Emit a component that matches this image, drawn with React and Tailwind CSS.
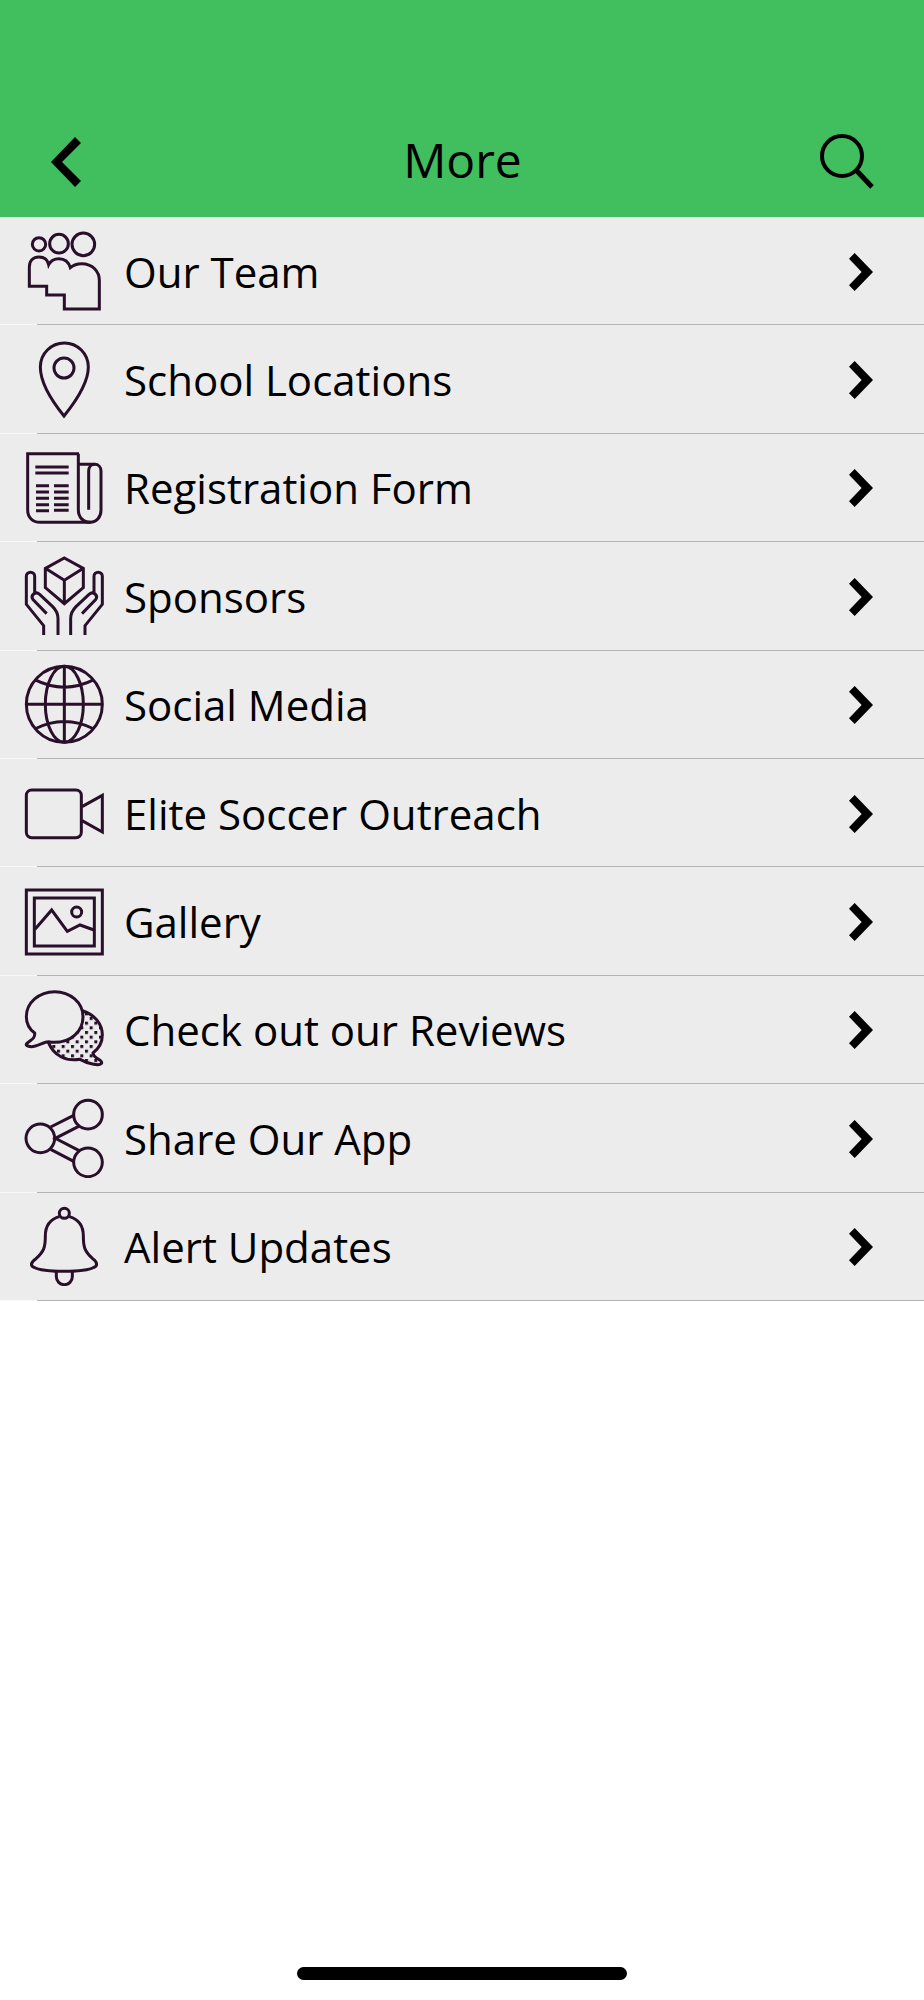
import React from "react";

const TeamIcon = () => (
  <>
    <circle cx="45" cy="40" r="20" />
    <circle cx="105" cy="38" r="28" />
    <circle cx="178" cy="40" r="34" />
    <path d="M16 166V108C16 88 28 78 45 78C60 78 71 87 74 101C80 89 92 83 105 83C121 83 134 93 139 110C148 102 160 98 173 98C206 98 226 122 226 148V234H121V192H68V166Z" />
  </>
);

const PinIcon = () => (
  <>
    <path d="M120 231C82 184 49 132 49 84A72 72 0 0 1 193 84C193 132 158 184 120 231Z" />
    <circle cx="120" cy="87" r="30" />
  </>
);

const FormIcon = () => (
  <>
    <path d="M200 226H48C26 226 11 211 11 190V20H165" />
    <path d="M163 20V188C163 211 178 226 198 226C218 226 231 210 231 190V72C231 60 223 52 212 52C201 52 194 60 194 72V188" />
    <path d="M165 52H212M34 60H134M34 78H134" />
    <path d="M36 116H75M36 135H75M36 154H75M36 173H75M36 191H75" />
    <path d="M90 116H134M90 135H134M90 154H134M90 173H134M90 190H134" />
  </>
);

const hand =
  "M59 237V209L7 145V61A12 12 0 0 1 32 61V113M68 173L27 131C18 118 34 104 47 115L86 152C96 162 102 172 102 188V237";

const SponsorsIcon = () => (
  <>
    <path d="M121 6L178 37V95L121 143L64 95V37ZM64 37L121 73L178 37M121 73V143" />
    <path d={hand} />
    <path d={hand} transform="matrix(-1 0 0 1 242 0)" />
  </>
);

const GlobeIcon = () => (
  <>
    <circle cx="121" cy="121" r="114" />
    <ellipse cx="121" cy="121" rx="57" ry="114" />
    <path d="M121 7V235M7 121H235M32 47Q121 92 210 47M32 195Q121 150 210 195" />
  </>
);

const VideoIcon = () => (
  <>
    <rect x="7" y="51" width="165" height="143" rx="16" />
    <path d="M174 101L235 67V177L174 143" />
  </>
);

const GalleryIcon = () => (
  <>
    <rect x="7" y="27" width="228" height="192" />
    <rect x="31" y="51" width="180" height="144" />
    <path d="M33 145L83 87L130 151L168 132L210 147" />
    <circle cx="158" cy="93" r="15" />
  </>
);

const ReviewsIcon = () => (
  <>
    <defs>
      <pattern id="dots" x="15" y="14" width="28" height="28" patternUnits="userSpaceOnUse">
        <path d="M0 0H9V9H0ZM14 14H23V23H14Z" fill="#2a0f2b" stroke="none" />
      </pattern>
    </defs>
    <path
      d="M177 66C213 78 235 105 235 138C235 160 225 178 207 192C207 208 236 212 233 222C228 232 195 226 168 211C125 218 90 200 73 160Z"
      fill="url(#dots)"
    />
    <path
      d="M73 158C60 158 40 173 22 173C8 172 5 168 8 164C20 152 34 150 32 132C16 120 7 103 7 83A85 75 0 0 1 177 83C177 128 140 160 92 160C84 160 78 159 73 158Z"
      fill="#ececec"
    />
  </>
);

const ShareIcon = () => (
  <>
    <circle cx="49" cy="121" r="43" />
    <circle cx="192" cy="50" r="43" />
    <circle cx="192" cy="193" r="43" />
    <path d="M80 87L149 52M164 85L94 121L164 157M80 154L149 190" />
  </>
);

const BellIcon = () => (
  <>
    <circle cx="121" cy="22" r="15" />
    <path d="M106 32C78 40 64 60 64 90C64 124 60 136 36 158C18 170 20 180 30 184C56 200 184 200 210 184C220 180 222 170 206 158C182 136 178 124 178 90C178 60 164 40 136 32" />
    <path d="M97 197V212A24 24 0 0 0 145 212V197" />
  </>
);

const items = [
  { label: "Our Team", icon: TeamIcon },
  { label: "School Locations", icon: PinIcon },
  { label: "Registration Form", icon: FormIcon },
  { label: "Sponsors", icon: SponsorsIcon },
  { label: "Social Media", icon: GlobeIcon },
  { label: "Elite Soccer Outreach", icon: VideoIcon },
  { label: "Gallery", icon: GalleryIcon },
  { label: "Check out our Reviews", icon: ReviewsIcon },
  { label: "Share Our App", icon: ShareIcon },
  { label: "Alert Updates", icon: BellIcon },
];

function MenuRow({ label, icon: Icon }) {
  return (
    <li className="flex flex-col bg-[#f8f8f8]">
      <a href="#" className="flex flex-1 items-center bg-[#ececec] pl-6 pr-[51px]">
        <svg
          viewBox="0 0 240 240"
          className="mr-5 size-20 shrink-0"
          fill="none"
          stroke="#2a0f2b"
          strokeWidth="9"
          aria-hidden="true"
        >
          <Icon />
        </svg>
        <span className="flex flex-1 items-center justify-between pt-0.5">
          <span className="text-[42px] leading-[56px]">{label}</span>
          <svg viewBox="0 0 72 114" className="h-[38px] w-6 shrink-0" aria-hidden="true">
            <path d="M0 17L17 0L72 57L17 114L0 97L38 57Z" />
          </svg>
        </span>
      </a>
      <span className="ml-[37px] h-px bg-[#b4b4b4]" />
    </li>
  );
}

export default function App() {
  return (
    <div className="flex min-h-screen flex-col bg-white font-['Open_Sans',sans-serif] text-black">
      <header className="bg-[#41be5d] pt-[107px]">
        <div className="grid h-[110px] grid-cols-3 items-center pl-[51px] pr-[50px]">
          <button type="button" aria-label="Back" className="justify-self-start">
            <svg viewBox="0 0 30 50" className="h-[50px] w-[30px]">
              <path d="M24 0L30 6L11 25L30 44L24 50L0 25Z" />
            </svg>
          </button>
          <h1 className="pb-1 text-center text-[48px] leading-[64px]">More</h1>
          <button type="button" aria-label="Search" className="justify-self-end">
            <svg viewBox="0 0 54 56" className="h-[56px] w-[54px]" fill="none" stroke="black" strokeWidth="4">
              <circle cx="22" cy="22" r="20" />
              <path d="M36 36L52 53" strokeWidth="5" />
            </svg>
          </button>
        </div>
      </header>

      <nav aria-label="More">
        <ul className="grid min-h-[1084px] auto-rows-fr">
          {items.map((item) => (
            <MenuRow key={item.label} label={item.label} icon={item.icon} />
          ))}
        </ul>
      </nav>

      <footer className="mt-auto flex justify-center pb-5">
        <div className="h-[13px] w-[330px] rounded-full bg-black" />
      </footer>
    </div>
  );
}
